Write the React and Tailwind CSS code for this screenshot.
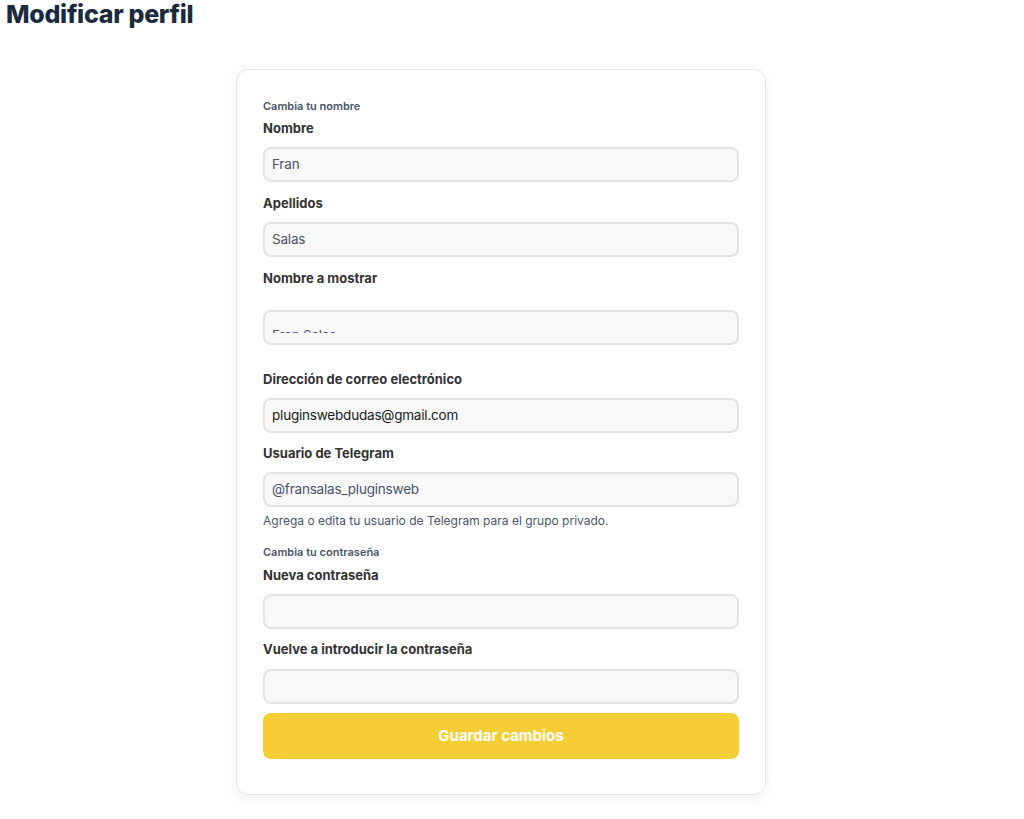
import React from "react";

const font = { fontFamily: "Inter, 'Noto Sans', sans-serif" };

function Label({ children, className = "" }) {
  return (
    <div className={"text-[13px] leading-[20px] font-bold text-[#333333] " + className}>
      {children}
    </div>
  );
}

function Field({ value, className = "", textClass = "text-[#4a5568]" }) {
  return (
    <div
      className={
        "h-[35px] rounded-[8px] border-2 border-[#e3e3e3] bg-[#f8f8f8] px-[7px] flex items-center text-[13.5px] tracking-[-0.2px] " +
        textClass +
        " " +
        className
      }
    >
      {value}
    </div>
  );
}

export default function App() {
  return (
    <div className="min-h-[819px] bg-white" style={font}>
      <h1 className="pl-[6px] text-[25px] leading-[28px] font-extrabold text-[#1c2a3e] tracking-[-0.3px]">
        Modificar perfil
      </h1>
      <div className="flex justify-center pt-[41px] pr-[22px]">
        <div className="w-[530px] rounded-[12px] border border-[#e5e5e5] bg-white shadow-[0_4px_14px_rgba(0,0,0,0.06)] px-[26px] pt-[28px] pb-[35px]">
          <div className="text-[11px] leading-[16px] font-semibold text-[#4a5568]">Cambia tu nombre</div>
          <Label className="mt-[4px]">Nombre</Label>
          <Field value="Fran" className="mt-[9px]" />
          <Label className="mt-[11px]">Apellidos</Label>
          <Field value="Salas" className="mt-[9px]" />
          <Label className="mt-[11px]">Nombre a mostrar</Label>
          <div className="mt-[22px] h-[35px] rounded-[8px] border-2 border-[#e3e3e3] bg-[#f8f8f8] px-[7px]">
            <div className="h-[21px] overflow-hidden pt-[13px] text-[13.5px] leading-[20px] text-[#4a5568] tracking-[-0.2px]">
              Fran Salas
            </div>
          </div>
          <Label className="mt-[24px]">Dirección de correo electrónico</Label>
          <Field value="pluginswebdudas@gmail.com" className="mt-[9px]" textClass="text-[#1a1a1a]" />
          <Label className="mt-[10px]">Usuario de Telegram</Label>
          <Field value="@fransalas_pluginsweb" className="mt-[9px]" />
          <div className="mt-[6px] text-[12px] leading-[16px] text-[#4a5568]">
            Agrega o edita tu usuario de Telegram para el grupo privado.
          </div>
          <div className="mt-[15px] text-[11px] leading-[16px] font-semibold text-[#4a5568]">Cambia tu contraseña</div>
          <Label className="mt-[5px]">Nueva contraseña</Label>
          <Field value="" className="mt-[9px]" />
          <Label className="mt-[10px]">Vuelve a introducir la contraseña</Label>
          <Field value="" className="mt-[10px]" />
          <button className="mt-[9px] w-full h-[46px] rounded-[8px] bg-[#f5ce35] text-white text-[15px] font-bold">
            Guardar cambios
          </button>
        </div>
      </div>
    </div>
  );
}
